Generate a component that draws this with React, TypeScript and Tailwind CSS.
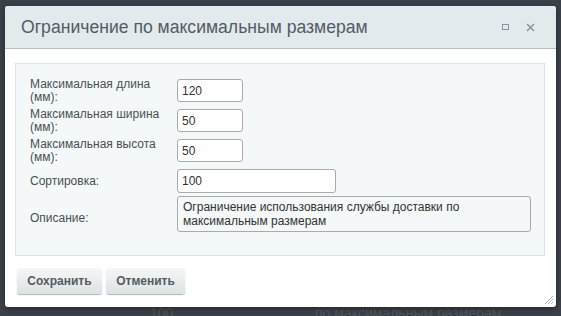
import React from "react";

const labelCls = "text-[12px] leading-[13px] text-[#4a4f55]";
const inputCls =
  "h-full rounded-[3px] border border-[#a7abb0] bg-white px-[4px] text-[12px] text-[#333] flex items-center";

export default function App() {
  return (
    <div
      className="relative w-[561px] h-[316px] bg-[#3b4148] overflow-hidden"
      style={{ fontFamily: '"Liberation Sans", Arial, sans-serif' }}
    >
      <div className="absolute left-[150px] top-[306px] text-[14px] leading-[14px] text-[#50565c]">
        100
      </div>
      <div className="absolute left-[315px] top-[306px] text-[14px] leading-[14px] text-[#50565c]">
        по максимальным размерам
      </div>
      <div className="absolute left-[5px] top-[6px] w-[551px] h-[301px] bg-white rounded-[3px] flex flex-col shadow-[0_2px_6px_rgba(0,0,0,0.4)]">
        <div className="h-[43px] shrink-0 bg-[#e3eaed] border-b border-[#b9bfc3] rounded-t-[3px] flex items-center pl-[16px] pr-[20px]">
          <div className="text-[17.6px] text-[#535c64] flex-1">
            Ограничение по максимальным размерам
          </div>
          <div className="w-[7px] h-[6px] border border-[#8c959d] mr-[17px]" />
          <svg width="9" height="9" viewBox="0 0 9 9" className="mr-[1px]">
            <path d="M1 1L8 8M8 1L1 8" stroke="#8c959d" strokeWidth="1.5" />
          </svg>
        </div>
        <div className="ml-[10px] mr-[11px] mt-[14px] h-[193px] bg-[#f4f8f9] border border-[#dbe5ea] pl-[14px] pt-[15px]">
          <div className="grid grid-cols-[147px_1fr] grid-rows-[23px_23px_23px_24px_36px] gap-y-[7px] [&>*]:min-h-0">
            <div className={`${labelCls} self-center`}>Максимальная длина<br />(мм):</div>
            <div className={`${inputCls} w-[66px]`}>120</div>
            <div className={`${labelCls} self-center`}>Максимальная ширина<br />(мм):</div>
            <div className={`${inputCls} w-[66px]`}>50</div>
            <div className={`${labelCls} self-center`}>Максимальная высота<br />(мм):</div>
            <div className={`${inputCls} w-[66px]`}>50</div>
            <div className={`${labelCls} self-center`}>Сортировка:</div>
            <div className={`${inputCls} w-[159px]`}>100</div>
            <div className={`${labelCls} self-center`}>Описание:</div>
            <div className="h-[36px] -mt-[4px] w-[354px] rounded-[3px] border border-[#a7abb0] bg-[#f4f8f9] px-[5px] pt-[3px] text-[12px] leading-[14px] text-[#333]">
              Ограничение использования службы доставки по
              <br />
              максимальным размерам
            </div>
          </div>
        </div>
        <div className="flex gap-[4px] ml-[12px] mt-[12px]">
          <div className="h-[26px] w-[85px] flex items-center justify-center rounded-[3px] bg-gradient-to-b from-[#f6f7f7] to-[#dde2e4] shadow-[0_1px_1px_rgba(0,0,0,0.3)] text-[12px] font-bold text-[#535c64]">
            Сохранить
          </div>
          <div className="h-[26px] w-[79px] flex items-center justify-center rounded-[3px] bg-gradient-to-b from-[#f6f7f7] to-[#dde2e4] shadow-[0_1px_1px_rgba(0,0,0,0.3)] text-[12px] font-bold text-[#535c64]">
            Отменить
          </div>
        </div>
        <svg
          width="10"
          height="10"
          viewBox="0 0 10 10"
          className="absolute right-[2px] bottom-[2px]"
        >
          <path d="M9 1L1 9M9 4L4 9M9 7L7 9" stroke="#b0b5b9" strokeWidth="1" />
        </svg>
      </div>
    </div>
  );
}
